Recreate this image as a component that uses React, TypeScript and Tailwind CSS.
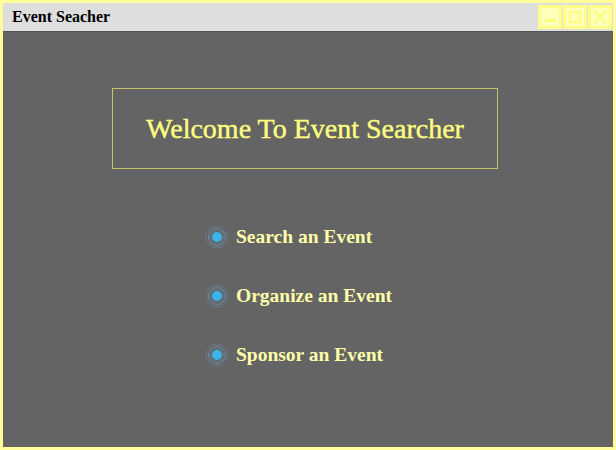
import React from 'react';

const options = ['Search an Event', 'Organize an Event', 'Sponsor an Event'];

function Radio() {
  return (
    <svg width="24" height="24" viewBox="0 0 24 24" className="shrink-0">
      <circle cx="12" cy="12" r="11" fill="#5f6468" stroke="#6a7a84" strokeWidth="1" />
      <circle cx="12" cy="12" r="8.5" fill="none" stroke="#7a8d98" strokeWidth="1" />
      <circle cx="12" cy="12" r="6.5" fill="none" stroke="#5d7d90" strokeWidth="1" />
      <circle cx="12" cy="12" r="5" fill="#3cb2ea" />
    </svg>
  );
}

export default function App() {
  return (
    <div className="w-[616px] h-[450px] bg-[#ffff99] p-[3px] flex flex-col font-['Liberation_Serif',serif]">
      <div className="h-[28px] bg-[#dedede] flex items-center justify-between pl-[9px] pr-[1px]">
        <span className="text-[16px] font-bold text-black">Event Seacher</span>
        <div className="flex gap-[1px]">
          <div className="w-[24px] h-[24px] border-[3px] border-[#ffff88] bg-[#ffffbb] flex items-end justify-center pb-[4px]">
            <div className="w-[10px] h-[3px] bg-[#ffff77]" />
          </div>
          <div className="w-[24px] h-[24px] border-[3px] border-[#ffff88] bg-[#ffffbb] flex items-center justify-center">
            <div className="w-[12px] h-[12px] border-[2px] border-[#ffff77]" />
          </div>
          <div className="w-[24px] h-[24px] border-[3px] border-[#ffff88] bg-[#ffffbb] flex items-center justify-center">
            <svg width="14" height="14" viewBox="0 0 14 14">
              <path d="M1 1 L13 13 M13 1 L1 13" stroke="#ffff77" strokeWidth="2" />
            </svg>
          </div>
        </div>
      </div>
      <div className="flex-1 bg-[#646464] border-t border-[#555] flex flex-col pt-[56px]">
        <div className="ml-[109px] w-[386px] h-[81px] border border-[#c4c46c] flex items-center justify-center">
          <span className="text-[28px] text-[#ffff80] [-webkit-text-stroke:0.4px_#ffff80]">Welcome To Event Searcher</span>
        </div>
        <div className="mt-[56px] flex flex-col gap-[35px] ml-[202px]">
          {options.map(o => (
            <label key={o} className="flex items-center gap-[7px] h-[24px]">
              <Radio />
              <span className="text-[19.5px] font-bold text-[#ffffaa]">{o}</span>
            </label>
          ))}
        </div>
      </div>
    </div>
  );
}
